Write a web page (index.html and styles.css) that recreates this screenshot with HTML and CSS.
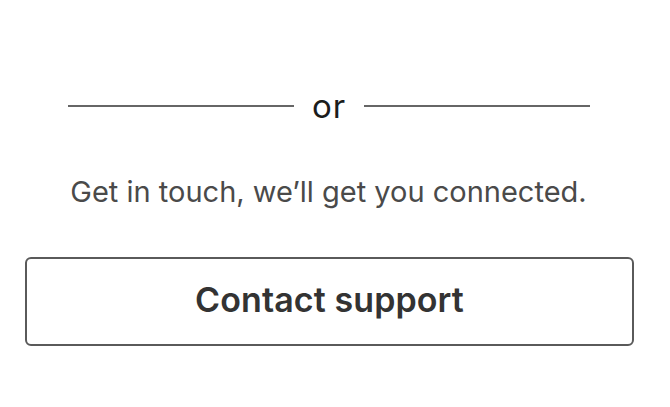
FILE: index.html
```html
<!DOCTYPE html>
<html>
<head>
<meta charset="utf-8">
<link rel="stylesheet" href="styles.css">
</head>
<body>
<div class="page">
  <div class="divider">
    <span class="line"></span>
    <span class="or">or</span>
    <span class="line"></span>
  </div>
  <p class="note">Get in touch, we’ll get you connected.</p>
  <button class="btn">Contact support</button>
</div>
</body>
</html>
```
FILE: styles.css
```css
html, body { margin: 0; padding: 0; background: #fff; }
body { font-family: Inter, "Noto Sans", sans-serif; width: 670px; height: 407px; overflow: hidden; }
.page { padding: 88px 36px 0 25px; display: flex; flex-direction: column; align-items: stretch; }
.divider { display: flex; align-items: center; gap: 18px; padding: 0 44px 0 43px; height: 36px; }
.line { flex: 1; height: 1.5px; background: #666; }
.or { font-size: 33px; color: #1c1c1c; line-height: 36px; letter-spacing: 1px; }
.note { margin: 50px 2px 0 0; text-align: center; font-size: 29px; color: #4a4a4a; line-height: 36px; letter-spacing: 0; }
.btn { margin-top: 47px; height: 89px; border: 2px solid #5a5a5a; border-radius: 6px; background: #fff; font-family: inherit; font-size: 34px; font-weight: 600; color: #333; padding: 0 0 4px; letter-spacing: 0.1px; }
```
